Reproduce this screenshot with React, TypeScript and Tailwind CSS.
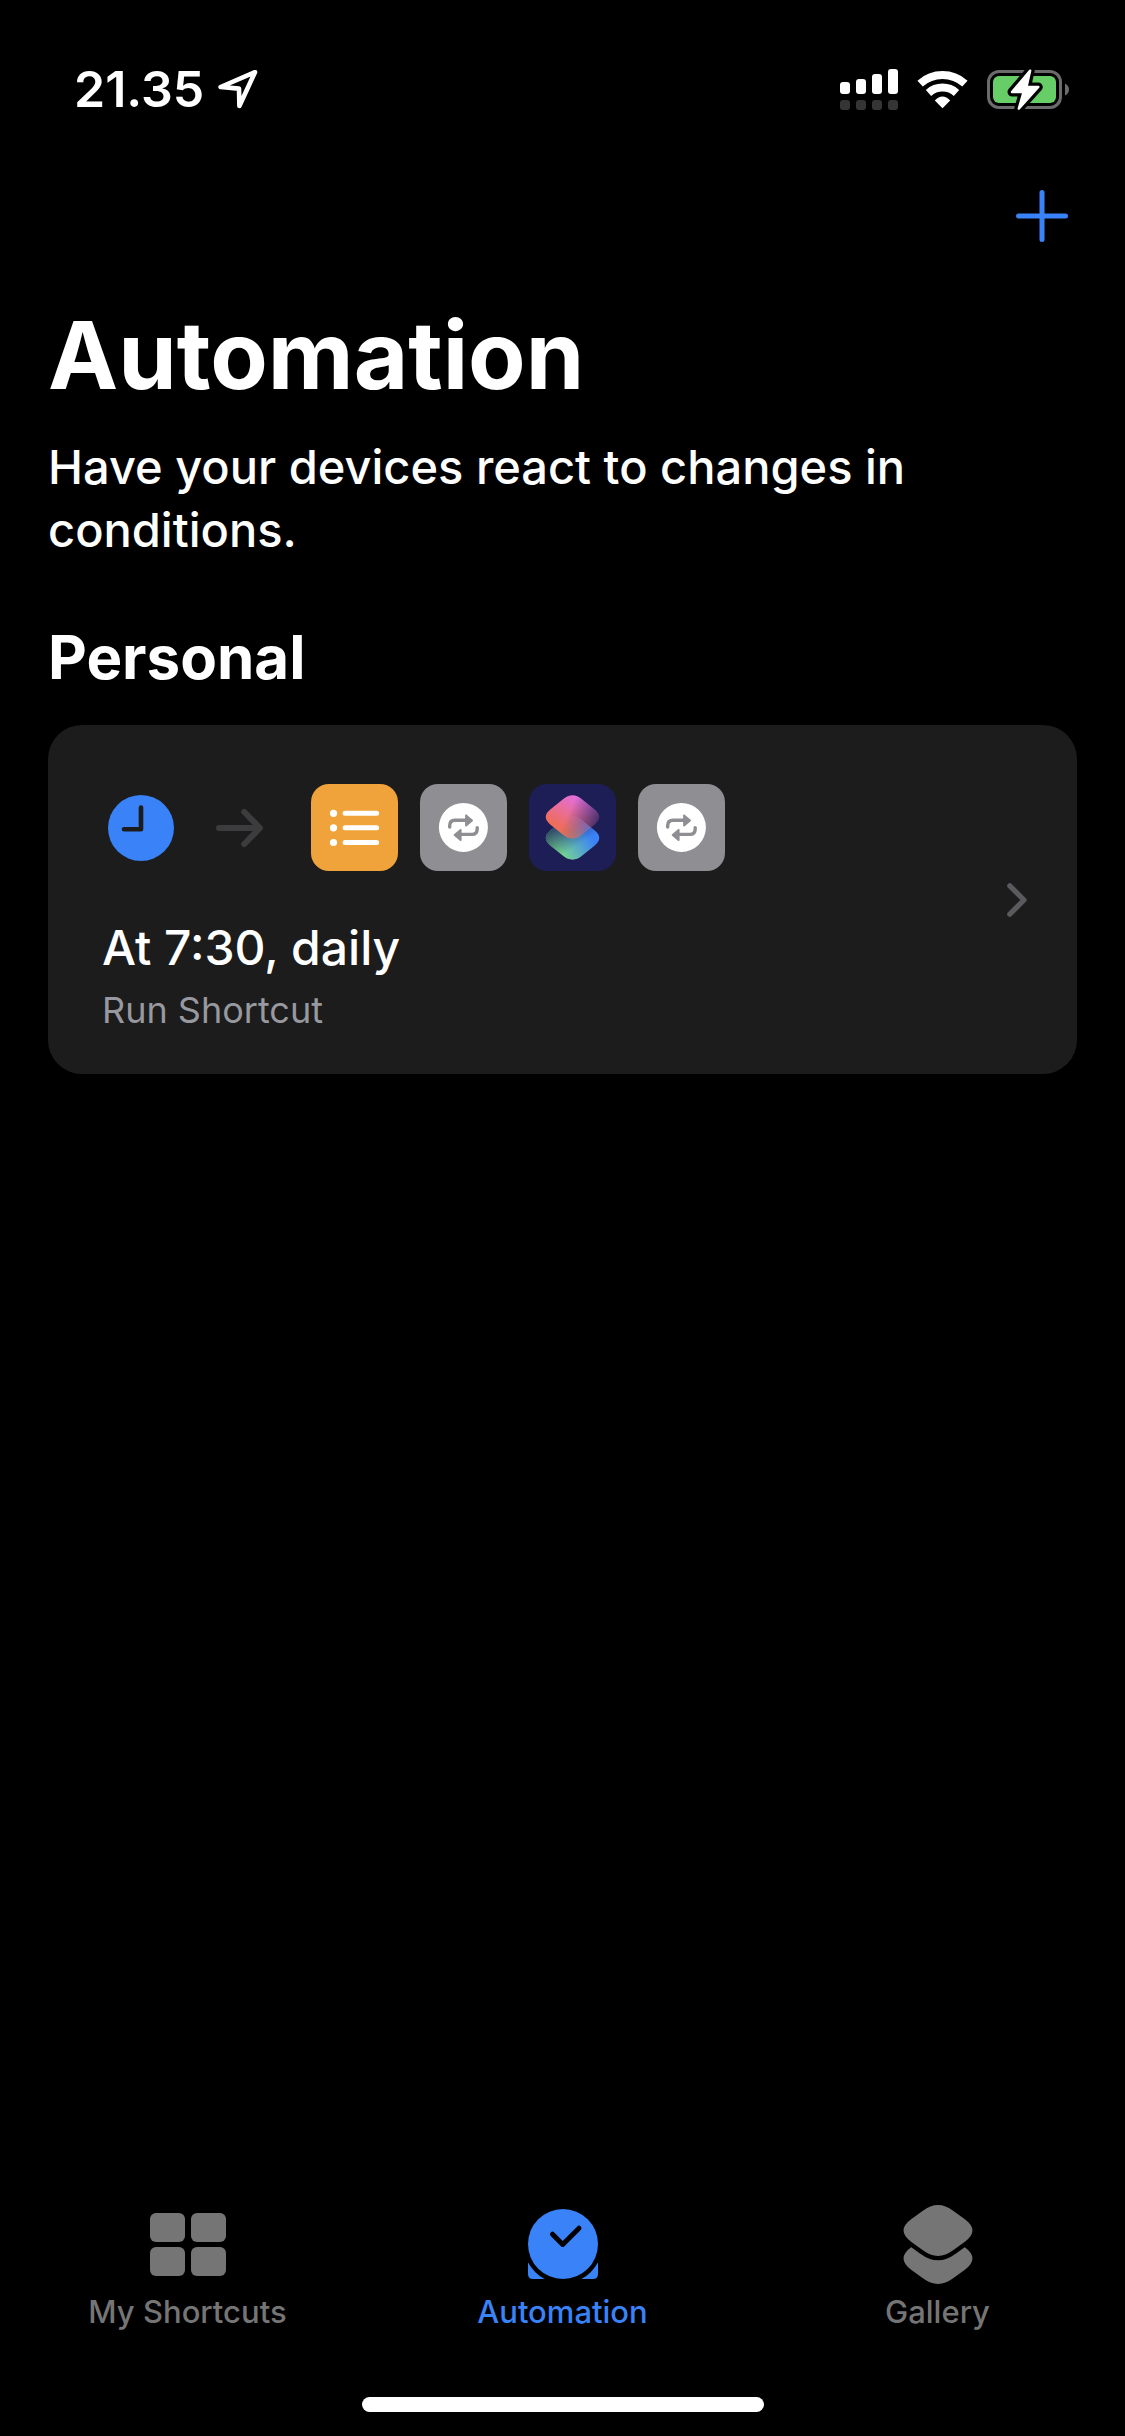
import type { ReactNode } from "react";

function LocationIcon() {
  return (
    <svg viewBox="158 19 40 40" className="size-10" fill="none" aria-hidden="true">
      <path d="M195 22.2 160.6 37 179 38.6 179.4 56Z" stroke="#fff" strokeWidth="4.6" strokeLinejoin="round" />
    </svg>
  );
}

function SignalIcon() {
  return (
    <svg viewBox="20 18 58 41" className="h-[41px] w-[58px]" aria-hidden="true">
      <g fill="#fff">
        <rect x="20" y="31" width="10" height="12" rx="3" />
        <rect x="36" y="28" width="10" height="15" rx="3" />
        <rect x="52" y="23" width="10" height="20" rx="3" />
        <rect x="68" y="18" width="10" height="25" rx="3" />
      </g>
      <g fill="#353535">
        <rect x="20" y="49" width="10" height="10" rx="3" />
        <rect x="36" y="49" width="10" height="10" rx="3" />
        <rect x="52" y="49" width="10" height="10" rx="3" />
        <rect x="68" y="49" width="10" height="10" rx="3" />
      </g>
    </svg>
  );
}

function WifiIcon() {
  return (
    <svg viewBox="97 19 51 39" className="h-[39px] w-[51px]" fill="none" aria-hidden="true">
      <path d="M100.1 32.6A33.5 33.5 0 0 1 144.9 32.6" stroke="#fff" strokeWidth="8" />
      <path d="M108.5 41.9A21 21 0 0 1 136.5 41.9" stroke="#fff" strokeWidth="8" />
      <path d="M122.5 57.3 114.8 49.4Q122.5 41.8 130.2 49.4Z" fill="#fff" />
    </svg>
  );
}

function BatteryIcon() {
  const bolt = "M210.2 19.6 192 41 203.5 41 198.8 57.6 218.3 36 206.5 36Z";
  return (
    <svg viewBox="167 17 83 43" className="h-[43px] w-[83px]" fill="none" aria-hidden="true">
      <rect x="168.5" y="20.5" width="72" height="36" rx="10.5" stroke="#6b6b6e" strokeWidth="3" />
      <rect x="173" y="25" width="63" height="27" rx="6" fill="#67ce67" />
      <path d="M245 32.5Q249 34.5 249 38.5T245 44.5Z" fill="#6b6b6e" />
      <path d={bolt} fill="#000" stroke="#000" strokeWidth="9" strokeLinejoin="round" />
      <path d={bolt} fill="#fff" stroke="#fff" strokeWidth="2.4" strokeLinejoin="round" />
    </svg>
  );
}

function ClockIcon() {
  return (
    <svg viewBox="0 0 66 66" className="size-[66px]" fill="none" aria-hidden="true">
      <circle cx="33" cy="33" r="33" fill="#3a82f7" />
      <path d="M33 12.5V34.3H16" stroke="#1c1c1c" strokeWidth="4.6" strokeLinecap="round" strokeLinejoin="round" />
    </svg>
  );
}

function ArrowIcon() {
  return (
    <svg viewBox="0 0 48 38" className="h-[38px] w-12" fill="none" aria-hidden="true">
      <path d="M3 19H43M28.3 3 44 19 28.3 35" stroke="#3c3c3e" strokeWidth="6" strokeLinecap="round" strokeLinejoin="round" />
    </svg>
  );
}

function ListTile() {
  const rows = [29.3, 43.8, 58.5];
  return (
    <svg viewBox="0 0 87 87" className="size-[87px] rounded-[18px] bg-[#f0a33b]" fill="none" aria-hidden="true">
      {rows.map((y) => (
        <g key={y}>
          <circle cx="22.5" cy={y} r="3.6" fill="#fff" />
          <path d={`M34.1 ${y}H65.6`} stroke="#fff" strokeWidth="5" strokeLinecap="round" />
        </g>
      ))}
    </svg>
  );
}

function RepeatTile() {
  return (
    <svg viewBox="0 0 87 87" className="size-[87px] rounded-[18px] bg-[#8e8e93]" fill="none" aria-hidden="true">
      <circle cx="43.4" cy="43.4" r="24.5" fill="#fff" />
      <g stroke="#8e8e93" strokeWidth="3.4" strokeLinecap="round">
        <path d="M29.7 43V41.5Q29.7 36.3 35 36.3H46" />
        <path d="M57.2 43.6V45Q57.2 50.4 52 50.4H41" />
      </g>
      <g fill="#8e8e93" stroke="#8e8e93" strokeWidth="2" strokeLinejoin="round">
        <path d="M46.1 31.4V41.4L52 36.4Z" />
        <path d="M40.6 45.9V56L34.7 50.9Z" />
      </g>
    </svg>
  );
}

function ShortcutsTile() {
  const diamond =
    "M34 15.2Q43.5 7.5 53 15.2L65.5 25.3Q75 33 65.5 40.7L53 50.8Q43.5 58.5 34 50.8L21.5 40.7Q12 33 21.5 25.3Z";
  return (
    <svg viewBox="0 0 87 87" className="size-[87px] rounded-[18px] bg-[#1d1e55]" aria-hidden="true">
      <defs>
        <linearGradient id="lower" gradientUnits="userSpaceOnUse" x1="34" y1="50" x2="62" y2="32">
          <stop offset="0" stopColor="#74d493" />
          <stop offset="1" stopColor="#3b82f7" />
        </linearGradient>
        <linearGradient id="lowerShade" gradientUnits="userSpaceOnUse" x1="24" y1="20" x2="40" y2="46">
          <stop offset="0" stopColor="#1f2a5c" stopOpacity="0.9" />
          <stop offset="1" stopColor="#1f2a5c" stopOpacity="0" />
        </linearGradient>
        <linearGradient id="upper" gradientUnits="userSpaceOnUse" x1="46" y1="12" x2="30" y2="42">
          <stop offset="0" stopColor="#e46fdc" />
          <stop offset="1" stopColor="#ee6d5c" />
        </linearGradient>
        <linearGradient id="upperFade" gradientUnits="userSpaceOnUse" x1="40" y1="28" x2="70" y2="42">
          <stop offset="0" stopColor="#fff" />
          <stop offset="1" stopColor="#fff" stopOpacity="0.15" />
        </linearGradient>
        <mask id="upperMask">
          <rect width="87" height="87" fill="url(#upperFade)" />
        </mask>
      </defs>
      <g transform="translate(0 21)">
        <path d={diamond} fill="url(#lower)" />
        <path d={diamond} fill="url(#lowerShade)" />
      </g>
      <path d={diamond} fill="url(#upper)" mask="url(#upperMask)" />
    </svg>
  );
}

function ChevronIcon() {
  return (
    <svg viewBox="0 0 20 34" className="h-[34px] w-5 shrink-0" fill="none" aria-hidden="true">
      <path d="M2.8 2.8 17 17 2.8 31.2" stroke="#5a5a5e" strokeWidth="5.2" strokeLinecap="round" strokeLinejoin="round" />
    </svg>
  );
}

function GridIcon() {
  return (
    <svg viewBox="0 0 76 63" className="h-[63px] w-[76px]" fill="currentColor" aria-hidden="true">
      <rect width="35" height="29" rx="6" />
      <rect x="41" width="35" height="29" rx="6" />
      <rect y="34" width="35" height="29" rx="6" />
      <rect x="41" y="34" width="35" height="29" rx="6" />
    </svg>
  );
}

function AutomationIcon() {
  return (
    <svg viewBox="0 0 70 70" className="size-[70px]" fill="none" aria-hidden="true">
      <path d="M0 45H70V65Q70 70 65 70H5Q0 70 0 65Z" fill="currentColor" />
      <circle cx="35" cy="35" r="39.5" fill="#000" />
      <circle cx="35" cy="35" r="35" fill="currentColor" />
      <path d="M24.5 25.2 34.7 35.4 51 19.2" stroke="#000" strokeWidth="5" strokeLinecap="round" strokeLinejoin="round" />
    </svg>
  );
}

function GalleryIcon() {
  const diamond =
    "M19.9 5.7Q35 -5.5 50.1 5.7L61.9 14.3Q77 25.5 61.9 36.7L50.1 45.3Q35 56.5 19.9 45.3L8.1 36.7Q-7 25.5 8.1 14.3Z";
  return (
    <svg viewBox="0 0 70 79" className="h-[79px] w-[70px]" fill="currentColor" aria-hidden="true">
      <path d={diamond} transform="translate(0 28)" />
      <path d={diamond} stroke="#000" strokeWidth="8.6" />
      <path d={diamond} />
    </svg>
  );
}

function Tab({ label, icon, active = false }: { label: string; icon: ReactNode; active?: boolean }) {
  return (
    <button
      type="button"
      aria-current={active ? "page" : undefined}
      className={
        active
          ? "flex flex-1 flex-col items-center gap-2.5 text-[#3a82f7]"
          : "flex flex-1 flex-col items-center gap-2.5 text-[#757575]"
      }
    >
      <span className="flex h-20 items-center">{icon}</span>
      <span className="text-[31px] leading-9 font-medium">{label}</span>
    </button>
  );
}

export default function App() {
  return (
    <div className="flex min-h-screen flex-col bg-black font-['Inter',sans-serif] text-white">
      <header className="flex items-center justify-between pt-[59px] pr-[55px] pl-[74px]">
        <div className="flex items-center gap-3.5">
          <time className="text-[50px] leading-[60px] font-semibold">21.35</time>
          <LocationIcon />
        </div>
        <div className="flex items-center gap-[19px]">
          <SignalIcon />
          <WifiIcon />
          <BatteryIcon />
        </div>
      </header>

      <main className="flex flex-1 flex-col px-12">
        <div className="mt-[71px] flex justify-end pr-[9px]">
          <button type="button" aria-label="New automation">
            <svg viewBox="0 0 52 52" className="size-[52px]" fill="none" aria-hidden="true">
              <path d="M26 2.5V49.5M2.5 26H49.5" stroke="#3a82f7" strokeWidth="5" strokeLinecap="round" />
            </svg>
          </button>
        </div>

        <h1 className="mt-[57px] text-[94px] leading-[112px] font-bold">Automation</h1>
        <p className="mt-6 text-[47px] leading-[63px] font-medium">
          Have your devices react to changes in conditions.
        </p>

        <h2 className="mt-[60px] text-[60px] leading-[72px] font-bold">Personal</h2>
        <button
          type="button"
          className="mt-8 flex w-full items-center justify-between rounded-[34px] bg-[#1c1c1c] pr-[50px] pl-[54px] text-left"
        >
          <span className="flex flex-col pt-[59px] pb-10">
            <span className="flex items-center">
              <span className="ml-1.5">
                <ClockIcon />
              </span>
              <span className="mr-[47px] ml-[42px]">
                <ArrowIcon />
              </span>
              <span className="flex gap-[22px]">
                <ListTile />
                <RepeatTile />
                <ShortcutsTile />
                <RepeatTile />
              </span>
            </span>
            <span className="mt-[47px] text-5xl leading-[60px] font-medium">At 7:30, daily</span>
            <span className="mt-2 text-4xl leading-[48px] text-[#98989f]">Run Shortcut</span>
          </span>
          <ChevronIcon />
        </button>
      </main>

      <nav aria-label="Main" className="flex">
        <Tab label="My Shortcuts" icon={<GridIcon />} />
        <Tab label="Automation" icon={<AutomationIcon />} active />
        <Tab label="Gallery" icon={<GalleryIcon />} />
      </nav>
      <div className="mx-auto mt-[67px] mb-6 h-[15px] w-[402px] rounded-full bg-white" />
    </div>
  );
}
